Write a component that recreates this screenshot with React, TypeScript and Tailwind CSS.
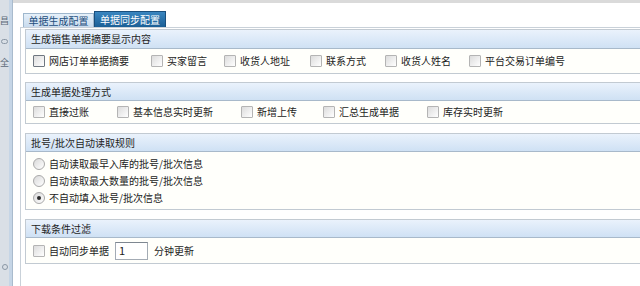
import React from "react";

const font = { fontFamily: '"Noto Sans CJK SC", "Noto Sans", sans-serif' };

function Checkbox({ dark = false }: { dark?: boolean }) {
  return (
    <span
      className={`inline-block w-[12px] h-[12px] shrink-0 rounded-[1px] border bg-linear-to-br from-[#dcdcdc] to-[#ffffff] ${
        dark ? "border-[#6f7780]" : "border-[#b4b4b4]"
      }`}
    />
  );
}

function Radio({ checked = false }: { checked?: boolean }) {
  return (
    <span className="inline-flex w-[12px] h-[12px] shrink-0 items-center justify-center rounded-full border border-[#a9a9a9] bg-linear-to-br from-[#d9d9d9] to-[#ffffff]">
      {checked && <span className="w-[4px] h-[4px] rounded-full bg-[#2b2b2b]" />}
    </span>
  );
}

function Section({
  title,
  className = "",
  head = "h-[18px]",
  children,
}: {
  title: string;
  className?: string;
  head?: string;
  children: React.ReactNode;
}) {
  return (
    <div className={`border border-[#c2cad2] border-r-0 ${className}`}>
      <div
        className={`${head} flex items-center pl-[5px] border-b border-[#a8b9ca] bg-linear-to-b from-[#eaf2fc] to-[#cfe1f4] text-[10px] text-[#1e1e1e]`}
      >
        {title}
      </div>
      <div className="bg-[#fffffb]">{children}</div>
    </div>
  );
}

function CheckItem({ label, w, dark }: { label: string; w: string; dark?: boolean }) {
  return (
    <div className={`flex items-center gap-[4px] ${w}`}>
      <Checkbox dark={dark} />
      <span>{label}</span>
    </div>
  );
}

export default function App() {
  return (
    <div
      className="w-[640px] h-[286px] bg-white flex overflow-hidden text-[10px] text-[#222] leading-none"
      style={font}
    >
      {/* left edge of the host window */}
      <div className="w-[9px] h-full bg-[#d9dfe6] flex flex-col items-center text-[#5d6b7a] text-[9px] pt-[16px] gap-[14px]">
        <span>昌</span>
        <span className="w-[7px] h-[5px] rounded-full border border-[#8a97a5]" />
        <span>全</span>
        <span className="mt-auto mb-[16px] w-[6px] h-[6px] rounded-full border border-[#8a97a5]" />
      </div>
      <div className="w-[4px] h-full bg-[#c5d5e6] border-r border-[#a9bbcd]" />

      <div className="flex-1 flex flex-col">
        <div className="h-[3px] bg-[#dadada]" />

        <div className="flex items-end h-[24px] pl-[10px]">
          <div className="h-[14px] w-[71px] flex items-center justify-center border border-b-0 border-[#9fb7cd] bg-linear-to-b from-[#e6f0f9] to-[#c8dbee] text-[#1d4e7c]">
            单据生成配置
          </div>
          <div className="h-[16px] w-[72px] flex items-center justify-center border border-b-0 border-[#1a4f7d] bg-linear-to-b from-[#3a86c0] to-[#1b5f96] text-white">
            单据同步配置
          </div>
        </div>

        <div className="flex-1 border-t border-l border-[#c9d1d9] ml-[7px] pl-[4px] pt-[1px] flex flex-col">
          <Section title="生成销售单据摘要显示内容" head="h-[19px]">
            <div className="h-[24px] flex items-center pl-[7px]">
              <CheckItem label="网店订单单据摘要" w="w-[118px]" dark />
              <CheckItem label="买家留言" w="w-[73px]" />
              <CheckItem label="收货人地址" w="w-[86px]" />
              <CheckItem label="联系方式" w="w-[75px]" />
              <CheckItem label="收货人姓名" w="w-[84px]" />
              <CheckItem label="平台交易订单编号" w="w-[100px]" />
            </div>
          </Section>

          <Section title="生成单据处理方式" className="mt-[8px]">
            <div className="h-[22px] flex items-center pl-[7px]">
              <CheckItem label="直接过账" w="w-[84px]" />
              <CheckItem label="基本信息实时更新" w="w-[124px]" />
              <CheckItem label="新增上传" w="w-[82px]" />
              <CheckItem label="汇总生成单据" w="w-[104px]" />
              <CheckItem label="库存实时更新" w="w-[100px]" />
            </div>
          </Section>

          <Section title="批号/批次自动读取规则" className="mt-[9px]">
            <div className="flex flex-col pl-[7px] pt-[6px] pb-[5px] gap-[5px]">
              <div className="flex items-center gap-[4px] h-[12px]">
                <Radio />
                <span>自动读取最早入库的批号/批次信息</span>
              </div>
              <div className="flex items-center gap-[4px] h-[12px]">
                <Radio />
                <span>自动读取最大数量的批号/批次信息</span>
              </div>
              <div className="flex items-center gap-[4px] h-[12px]">
                <Radio checked />
                <span>不自动填入批号/批次信息</span>
              </div>
            </div>
          </Section>

          <Section title="下载条件过滤" className="mt-[9px]">
            <div className="h-[25px] flex items-center pl-[7px] gap-[4px]">
              <Checkbox />
              <span>自动同步单据</span>
              <div className="ml-[2px] w-[33px] h-[18px] border border-[#a3abb4] border-t-[#7e8791] bg-white flex items-center pl-[3px] text-[11px] text-[#222]">
                1
              </div>
              <span className="ml-[2px]">分钟更新</span>
            </div>
          </Section>
        </div>
      </div>
    </div>
  );
}
